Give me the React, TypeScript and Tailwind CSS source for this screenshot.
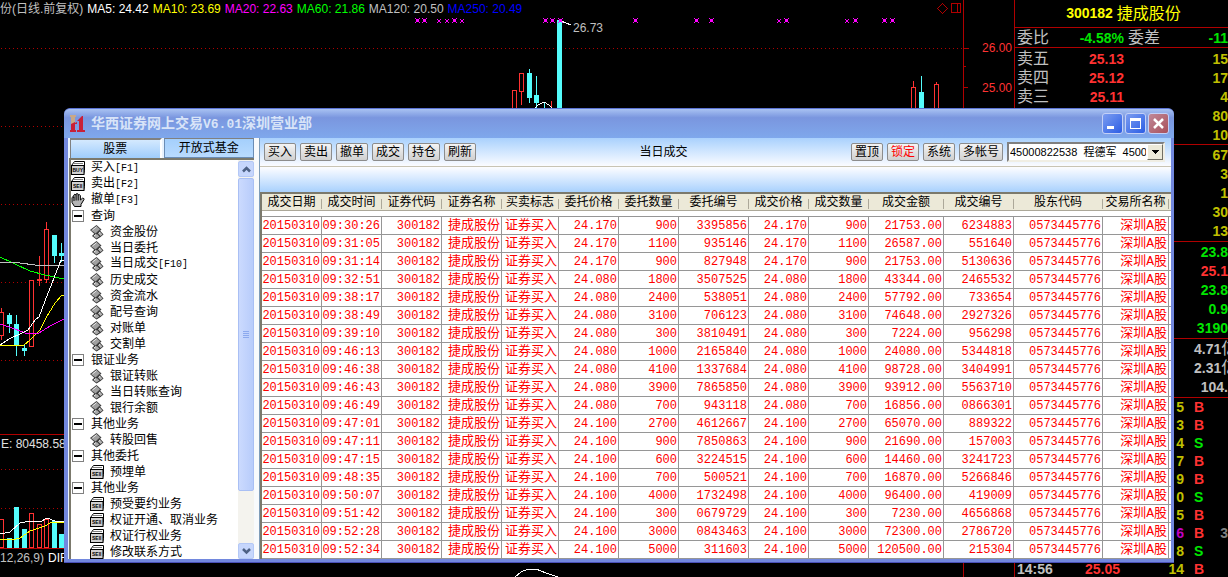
import type { ReactNode } from 'react';
import clsx from 'clsx';

const SANS = "font-['Liberation_Sans','Noto_Sans_CJK_SC',sans-serif]";
const MONO = "font-['Liberation_Mono','Noto_Sans_CJK_SC',monospace]";

/* ---------- data ---------- */

const AVERAGES = [
  { text: 'MA5: 24.42', color: 'text-white' },
  { text: 'MA10: 23.69', color: 'text-[#ffff00]' },
  { text: 'MA20: 22.63', color: 'text-[#ff00ff]' },
  { text: 'MA60: 21.86', color: 'text-[#00ff00]' },
  { text: 'MA120: 20.50', color: 'text-[#c0c0c0]' },
  { text: 'MA250: 20.49', color: 'text-[#0000ff]' },
];

type Candle = { x: number; top: number; bottom: number; high: number; low: number; up?: boolean };

const CANDLES: Candle[] = [
  { x: -1, top: 312, bottom: 336, high: 308, low: 340, up: true },
  { x: 7, top: 315, bottom: 324, high: 313, low: 333 },
  { x: 14, top: 324, bottom: 346, high: 315, low: 356 },
  { x: 22, top: 348, bottom: 351, high: 345, low: 356 },
  { x: 29, top: 280, bottom: 347, high: 280, low: 347, up: true },
  { x: 37, top: 279, bottom: 281, high: 256, low: 286, up: true },
  { x: 44, top: 229, bottom: 280, high: 222, low: 283, up: true },
  { x: 52, top: 235, bottom: 256, high: 235, low: 263 },
  { x: 59, top: 253, bottom: 256, high: 243, low: 262 },
  { x: 512, top: 90, bottom: 120, high: 90, low: 120, up: true },
  { x: 519, top: 73, bottom: 92, high: 73, low: 105, up: true },
  { x: 527, top: 73, bottom: 98, high: 69, low: 103 },
  { x: 534, top: 95, bottom: 103, high: 76, low: 108 },
  { x: 542, top: 112, bottom: 120, high: 103, low: 120 },
  { x: 549, top: 112, bottom: 120, high: 101, low: 120, up: true },
  { x: 557, top: 20, bottom: 120, high: 20, low: 120 },
  { x: 911, top: 87, bottom: 120, high: 81, low: 120, up: true },
  { x: 919, top: 92, bottom: 120, high: 76, low: 120 },
  { x: 934, top: 84, bottom: 120, high: 82, low: 120, up: true },
];

const BIG_MARKS = [417, 424, 454, 545, 552, 560, 635, 696, 711, 786, 855, 884, 892];
const SMALL_MARKS = [439, 447, 462, 779, 847];

const VOLUMES = [
  { x: -1, top: 84, up: true },
  { x: 7, top: 103 },
  { x: 14, top: 72 },
  { x: 22, top: 94 },
  { x: 29, top: 78, up: true },
  { x: 37, top: 89, up: true },
  { x: 44, top: 84, up: true },
  { x: 52, top: 86 },
  { x: 59, top: 99 },
];

const ASKS = [
  { label: '卖五', price: '25.13', size: '15' },
  { label: '卖四', price: '25.12', size: '17' },
  { label: '卖三', price: '25.11', size: '4' },
  { label: '', price: '', size: '80' },
  { label: '', price: '', size: '10' },
];
const BIDS = ['67', '3', '1', '30', '13'];
const STATS = [
  { value: '23.8', color: 'text-[#00e600]' },
  { value: '25.1', color: 'text-[#ff3232]' },
  { value: '23.8', color: 'text-[#00e600]' },
  { value: '0.9', color: 'text-[#00e600]' },
  { value: '3190', color: 'text-[#00e600]' },
];
const TICKS = [
  { lots: '5', side: 'B' },
  { lots: '3', side: 'B' },
  { lots: '4', side: 'S' },
  { lots: '7', side: 'B' },
  { lots: '9', side: 'B' },
  { lots: '0', side: 'S' },
  { lots: '5', side: 'B' },
  { lots: '6', side: 'B', big: true, extra: '3' },
  { lots: '8', side: 'S' },
  { lots: '14', side: 'B', time: '14:56', price: '25.05' },
];

type TreeItem = { label: string; icon: 'buy' | 'sell' | 'hand' | 'group' | 'leaf'; hotkey?: string; child?: boolean };

const TREE: TreeItem[] = [
  { label: '买入', hotkey: '[F1]', icon: 'buy' },
  { label: '卖出', hotkey: '[F2]', icon: 'sell' },
  { label: '撤单', hotkey: '[F3]', icon: 'hand' },
  { label: '查询', icon: 'group' },
  { label: '资金股份', icon: 'leaf', child: true },
  { label: '当日委托', icon: 'leaf', child: true },
  { label: '当日成交', hotkey: '[F10]', icon: 'leaf', child: true },
  { label: '历史成交', icon: 'leaf', child: true },
  { label: '资金流水', icon: 'leaf', child: true },
  { label: '配号查询', icon: 'leaf', child: true },
  { label: '对账单', icon: 'leaf', child: true },
  { label: '交割单', icon: 'leaf', child: true },
  { label: '银证业务', icon: 'group' },
  { label: '银证转账', icon: 'leaf', child: true },
  { label: '当日转账查询', icon: 'leaf', child: true },
  { label: '银行余额', icon: 'leaf', child: true },
  { label: '其他业务', icon: 'group' },
  { label: '转股回售', icon: 'leaf', child: true },
  { label: '其他委托', icon: 'group' },
  { label: '预埋单', icon: 'sell', child: true },
  { label: '其他业务', icon: 'group' },
  { label: '预受要约业务', icon: 'sell', child: true },
  { label: '权证开通、取消业务', icon: 'sell', child: true },
  { label: '权证行权业务', icon: 'sell', child: true },
  { label: '修改联系方式', icon: 'sell', child: true },
];

const COLUMNS = [
  { title: '成交日期', width: 'w-[60px]' },
  { title: '成交时间', width: 'w-[60px]' },
  { title: '证券代码', width: 'w-[60px]' },
  { title: '证券名称', width: 'w-[60px]' },
  { title: '买卖标志', width: 'w-[57px]' },
  { title: '委托价格', width: 'w-[60px]' },
  { title: '委托数量', width: 'w-[60px]' },
  { title: '委托编号', width: 'w-[70px]' },
  { title: '成交价格', width: 'w-[60px]' },
  { title: '成交数量', width: 'w-[60px]' },
  { title: '成交金额', width: 'w-[75px]' },
  { title: '成交编号', width: 'w-[70px]' },
  { title: '股东代码', width: 'w-[89px]' },
  { title: '交易所名称', width: 'w-[66px]' },
];

// time, price, quantity, order no., amount, deal no.
const DEALS = [
  ['09:30:26', '24.170', '900', '3395856', '21753.00', '6234883'],
  ['09:31:05', '24.170', '1100', '935146', '26587.00', '551640'],
  ['09:31:14', '24.170', '900', '827948', '21753.00', '5130636'],
  ['09:32:51', '24.080', '1800', '3507525', '43344.00', '2465532'],
  ['09:38:17', '24.080', '2400', '538051', '57792.00', '733654'],
  ['09:38:49', '24.080', '3100', '706123', '74648.00', '2927326'],
  ['09:39:10', '24.080', '300', '3810491', '7224.00', '956298'],
  ['09:46:13', '24.080', '1000', '2165840', '24080.00', '5344818'],
  ['09:46:38', '24.080', '4100', '1337684', '98728.00', '3404991'],
  ['09:46:43', '24.080', '3900', '7865850', '93912.00', '5563710'],
  ['09:46:49', '24.080', '700', '943118', '16856.00', '0866301'],
  ['09:47:01', '24.100', '2700', '4612667', '65070.00', '889322'],
  ['09:47:11', '24.100', '900', '7850863', '21690.00', '157003'],
  ['09:47:15', '24.100', '600', '3224515', '14460.00', '3241723'],
  ['09:48:35', '24.100', '700', '500521', '16870.00', '5266846'],
  ['09:50:07', '24.100', '4000', '1732498', '96400.00', '419009'],
  ['09:51:42', '24.100', '300', '0679729', '7230.00', '4656868'],
  ['09:52:28', '24.100', '3000', '0843463', '72300.00', '2786720'],
  ['09:52:34', '24.100', '5000', '311603', '120500.00', '215304'],
];

/* ---------- chart ---------- */

function GridLine({ y }: { y: number }) {
  return <line x1="1" x2="100%" y1={y + 0.5} y2={y + 0.5} stroke="#b00000" strokeDasharray="1 3" />;
}

function CandleShape({ x, top, bottom, high, low, up }: Candle) {
  const color = up ? '#ff3232' : '#54fcfc';
  return (
    <g>
      <rect x={x + 2} y={high} width="1" height={top - high} fill={color} />
      <rect x={x + 2} y={bottom} width="1" height={low - bottom} fill={color} />
      <rect x={x} y={top} width="5" height={bottom - top} fill={color} />
      {up && bottom - top > 2 && <rect x={x + 1} y={top + 1} width="3" height={bottom - top - 2} fill="#000" />}
    </g>
  );
}

function PricePane() {
  return (
    <section className="relative h-[435px] shrink-0 border-b border-[#b00000]">
      <svg className="absolute inset-0 h-full w-full" shapeRendering="crispEdges">
        {[48, 126, 204, 282, 360].map((y) => (
          <GridLine key={y} y={y} />
        ))}
        {CANDLES.map((c) => (
          <CandleShape key={c.x} {...c} />
        ))}
        <g fill="none">
          <polyline points="0,257 13,263 30,271 45,275 64,279" stroke="#00ff00" />
          <polyline points="0,262 20,263 35,265 64,265" stroke="#c0c0c0" />
          <polyline points="0,345 24,345 30,340 40,330 46,318 55,303 62,295 66,295" stroke="#ffff00" />
          <polyline points="0,324 15,329 25,333 39,333 50,326 64,319" stroke="#ff00ff" />
          <polyline points="0,345 9,339 22,333 28,330 35,320 39,317 45,301 54,278 61,260 66,260" stroke="#fff" />
          <polyline points="535,108 538,105 544,102 549,105 553,109" stroke="#fff" />
          <polyline points="561,21 566,23 571,25" stroke="#fff" />
        </g>
        <g stroke="#ff00ff">
          {BIG_MARKS.map((x) => (
            <g key={x}>
              <path d={`M${x - 2} 18l5 5M${x + 3} 18l-5 5`} />
              <rect x={x - 1} y="19" width="3" height="3" fill="#ff00ff" stroke="none" />
            </g>
          ))}
          {SMALL_MARKS.map((x) => (
            <path key={x} d={`M${x - 2} 19l4 4M${x + 2} 19l-4 4`} />
          ))}
        </g>
        <g fill="none" stroke="#b00000">
          <path d="M942.5 3.5l5 5-5 5-5-5z" />
          <path d="M951.5 3.5h9v9h-9zM957.5 3.5v9" />
        </g>
        <text x="573" y="32" fill="#c0c0c0" className="text-[12px]">
          26.73
        </text>
      </svg>
      <header className="relative flex h-[18px] items-center gap-1 text-[12px] leading-none whitespace-nowrap text-[#c0c0c0]">
        <span>份(日线.前复权)</span>
        {AVERAGES.map((a) => (
          <span key={a.text} className={a.color}>
            {a.text}
          </span>
        ))}
      </header>
    </section>
  );
}

function VolumePane() {
  return (
    <section className="relative h-[114px] shrink-0 border-b border-[#b00000]">
      <svg className="absolute inset-0 h-full w-full" shapeRendering="crispEdges">
        <GridLine y={34} />
        <GridLine y={73} />
        {VOLUMES.map((v) => (
          <CandleShape key={v.x} x={v.x} top={v.top} bottom={113} high={v.top} low={113} up={v.up} />
        ))}
        <polyline points="0,99 10,97 20,88 30,86 40,87 47,83 55,86 66,87" fill="none" stroke="#fff" />
        <polyline points="0,104 12,105 20,103 30,96 45,91 50,88 66,87" fill="none" stroke="#ffff00" />
      </svg>
      <header className="relative flex h-[18px] items-center pl-px text-[12px] whitespace-nowrap text-[#e0e0e0]">
        E: 80458.58
      </header>
    </section>
  );
}

function MacdPane() {
  return (
    <section className="relative flex-1">
      <svg className="absolute inset-0 h-full w-full" shapeRendering="crispEdges">
        <polyline points="514,29 521,23 528,20 536,20 546,24 558,28" fill="none" stroke="#fff" />
      </svg>
      <header className="relative flex h-[18px] items-center gap-1 text-[12px] whitespace-nowrap text-[#c0c0c0]">
        <span>12,26,9)</span>
        <span className="text-white">DIF</span>
      </header>
    </section>
  );
}

function PriceAxis() {
  return (
    <aside className="relative w-[52px] shrink-0 border-x border-[#b00000] pt-10 text-right text-[12px] leading-4 text-[#ff3232]">
      <svg className="absolute top-0 left-0 h-28 w-2" shapeRendering="crispEdges" fill="#b00000">
        <rect y="48" width="5" height="1" />
        <rect y="66" width="2" height="1" />
        <rect y="87" width="4" height="1" />
      </svg>
      <ul className="flex flex-col gap-6 pr-0.5">
        <li>26.00</li>
        <li>25.00</li>
      </ul>
    </aside>
  );
}

/* ---------- quote panel ---------- */

function QuoteGroup({ children }: { children: ReactNode }) {
  return <div className="shrink-0 border-b border-[#b00000] pt-px">{children}</div>;
}

function QuotePanel() {
  return (
    <aside className="flex w-[213px] shrink-0 flex-col overflow-hidden text-[14px] font-bold whitespace-nowrap text-[#c0c000]">
      <h2 className="flex h-7 shrink-0 items-center justify-center gap-1 border-b border-[#b00000] pl-1 text-[#ffff00]">
        300182 <span className="text-[16px] leading-none font-normal">捷成股份</span>
      </h2>
      <div className="grid h-5 shrink-0 grid-cols-[40px_67px_40px_1fr] items-center border-b border-[#b00000] pl-0.5 leading-none text-[#00e600]">
        <span className="text-[16px] font-normal text-[#c0c0c0]">委比</span>
        <span className="text-right">-4.58%</span>
        <span className="pl-1 text-[16px] font-normal text-[#c0c0c0]">委差</span>
        <span className="text-right">-11</span>
      </div>
      <QuoteGroup>
        {ASKS.map((a, i) => (
          <div key={i} className="grid h-[19px] grid-cols-[40px_67px_1fr] items-center pl-0.5 leading-none">
            <span className="text-[16px] font-normal text-[#c0c0c0]">{a.label}</span>
            <span className="text-right text-[#ff3232]">{a.price}</span>
            <span className="text-right">{a.size}</span>
          </div>
        ))}
      </QuoteGroup>
      <QuoteGroup>
        {BIDS.map((b) => (
          <p key={b} className="h-[19px] text-right leading-[19px]">
            {b}
          </p>
        ))}
      </QuoteGroup>
      <QuoteGroup>
        {STATS.map((s, i) => (
          <p key={i} className={clsx('h-[19px] text-right leading-[19px]', s.color)}>
            {s.value}
          </p>
        ))}
      </QuoteGroup>
      <QuoteGroup>
        {['4.71', '2.31'].map((v) => (
          <p key={v} className="h-[19px] pl-[179px] leading-[19px] text-[#c0c0c0]">
            {v}
            <span className="text-[16px] leading-none font-normal">亿</span>
          </p>
        ))}
        <p className="h-[19px] text-right leading-[19px] text-[#c0c0c0]">104.</p>
      </QuoteGroup>
      <ul>
        {TICKS.map((t, i) => (
          <li key={i} className="grid h-[18px] grid-cols-[38px_67px_64px_1fr_auto] items-center leading-none">
            <span className="pl-0.5 text-[#c0c0c0]">{t.time}</span>
            <span className="text-right text-[#ff3232]">{t.price}</span>
            <span className={clsx('text-right', t.big && 'text-[#c000c0]')}>{t.lots}</span>
            <span className={clsx('pl-2.5', t.side === 'B' ? 'text-[#ff3232]' : 'text-[#00e600]')}>{t.side}</span>
            <span className="text-[#808080]">{t.extra}</span>
          </li>
        ))}
      </ul>
    </aside>
  );
}

/* ---------- icons ---------- */

function BoxIcon({ text }: { text: string }) {
  return (
    <svg width="14" height="14" viewBox="0 0 14 14" className="shrink-0">
      <path d="M.5 4.5l3-4h10v9l-1 4H.5z" fill="#fff" stroke="#000" />
      <path d="M3 2.5h9" stroke="#808080" fill="none" />
      <rect x=".5" y="4.5" width="12.500" height="9" fill="#d0d0d0" stroke="#000" />
      <text x="6.700" y="11" textAnchor="middle" fontSize="5" fontWeight="bold" fill="#000">
        {text}
      </text>
    </svg>
  );
}

function HandIcon() {
  return (
    <svg width="14" height="14" viewBox="0 0 14 14" className="shrink-0">
      <path
        d="M3.500 13.500L1 9.500V4.500Q1.800 3 2.800 4.500V2Q3.800 .5 5 2V1.200Q6 -.2 7.200 1.200V2Q8.400 1 9.400 2.500V7L11.500 5.200Q13.500 5.200 13 6.500L10 11.500V13.500z"
        fill="#b4b4b4"
        stroke="#000"
      />
      <path d="M3 4v4M5.100 2v5.500M7.200 2v5.500" stroke="#000" fill="none" />
    </svg>
  );
}

function LeafIcon() {
  return (
    <svg width="14" height="15" viewBox="0 0 14 15" className="shrink-0">
      <path d="M9.500 5L13.500 9.500 10.500 12 6.500 14.500 2 11 5 8z" fill="#303030" />
      <path d="M6.500 0L11.500 4.500 5.500 10 0 5z" fill="#404040" />
      <path d="M6.500 1L10 4.300 5.500 8.500 1.200 5.200z" fill="#a0a0a0" />
      <path d="M9.800 6.500L12.500 9.500 10.500 11 8 8.500z" fill="#b4b4b4" />
      <path d="M5.500 9.800L7 9 9.500 11.500 6.300 13.500 3.200 11z" fill="#a8a8a8" />
      <path d="M2.500 5L6.500 1.800M4 10.800L6 9.500M8.800 8.300L10 7.200" stroke="#e8e8e8" />
    </svg>
  );
}

function GroupIcon() {
  return (
    <svg width="12" height="12" viewBox="0 0 12 12" className="mx-px shrink-0" shapeRendering="crispEdges">
      <rect x=".5" y=".5" width="11" height="11" fill="#fff" stroke="#808080" />
      <rect x="2" y="5" width="8" height="2" fill="#000" />
    </svg>
  );
}

function TreeIcon({ icon }: { icon: TreeItem['icon'] }) {
  if (icon === 'buy') return <BoxIcon text="BUY" />;
  if (icon === 'sell') return <BoxIcon text="SEll" />;
  if (icon === 'hand') return <HandIcon />;
  if (icon === 'group') return <GroupIcon />;
  return <LeafIcon />;
}

/* ---------- trading window ---------- */

function TitleBar() {
  const button = 'flex size-[21px] items-center justify-center rounded-[3px] border border-[#c3d0f7]';
  return (
    <header className="flex h-[30px] shrink-0 items-center gap-1.5 rounded-t-md border-t border-[#5c74d4] bg-linear-to-b from-[#a9c2f2] via-[#7a96df] via-30% to-[#7fa8ec] pr-[5px] pl-1.5">
      <svg width="15" height="17" viewBox="0 0 15 17">
        <path d="M0 0h6v2H5v7H1V2H0z" fill="#c8a888" />
        <path d="M1 9l4-2v8h1v2H0v-2h1zM5 8l2-1v2H5z" fill="#c82038" />
        <path d="M7 6l5-5h1v14h2v2H7v-2h2V6z" fill="#c82038" />
      </svg>
      <h1 className="flex-1 truncate text-[14px] leading-none font-bold text-[#d8e4f8]">
        华西证券网上交易<span className={clsx(MONO, 'text-[13px]')}>V6.01</span>深圳营业部
      </h1>
      <div className="flex gap-0.5">
        <button aria-label="最小化" className={clsx(button, 'bg-linear-to-br from-[#7c9cf0] to-[#2c5ce4]')}>
          <svg width="13" height="13">
            <rect x="1" y="9" width="7" height="3" fill="#fff" />
          </svg>
        </button>
        <button aria-label="最大化" className={clsx(button, 'bg-linear-to-br from-[#7c9cf0] to-[#2c5ce4]')}>
          <svg width="13" height="13" shapeRendering="crispEdges">
            <path d="M1 1h11v11H1zM2 4v7h9V4z" fill="#fff" fillRule="evenodd" />
          </svg>
        </button>
        <button aria-label="关闭" className={clsx(button, 'bg-linear-to-br from-[#c08898] to-[#a8505c]')}>
          <svg width="13" height="13">
            <path d="M2 2l9 9M11 2l-9 9" stroke="#fff" strokeWidth="2.500" />
          </svg>
        </button>
      </div>
    </header>
  );
}

function ScrollButton({ down }: { down?: boolean }) {
  return (
    <button
      aria-label={down ? '向下滚动' : '向上滚动'}
      className="flex h-4 shrink-0 items-center justify-center rounded-[2px] border border-[#b4c8f6] bg-[#c6d6fc]"
    >
      <svg width="9" height="7" fill="none" stroke="#4d6185" strokeWidth="2.500">
        <path d={down ? 'M1 1l3.500 3.500L8 1' : 'M1 5.500L4.500 2 8 5.500'} />
      </svg>
    </button>
  );
}

function Sidebar() {
  return (
    <nav className="flex w-[185px] shrink-0 flex-col">
      <div role="tablist" className="flex h-5 shrink-0 gap-0.5 pl-px text-[12px] leading-none">
        <button
          role="tab"
          aria-selected="true"
          className="flex-1 border-t-2 border-r-2 border-l border-t-[#808080] border-r-white border-l-[#808080] bg-linear-to-b from-[#d4e9fe] to-[#9fcdfc]"
        >
          股票
        </button>
        <button
          role="tab"
          aria-selected="false"
          className="flex-1 border border-t-[#808080] border-r-[#6b8db5] border-b-[#6b8db5] border-l-[#6b8db5] bg-linear-to-b from-[#a4cffc] to-[#b9dbfe]"
        >
          开放式基金
        </button>
      </div>
      <div className="flex min-h-0 flex-1 border-t-2 border-l-2 border-[#7b796c] bg-white">
        <ul className="min-w-0 flex-1 overflow-hidden text-[12px] whitespace-nowrap text-black">
          {TREE.map((item, i) => (
            <li key={i}>
              <a href="#" className={clsx('flex h-4 items-center gap-1.5 leading-4', item.child && 'pl-[19px]')}>
                <TreeIcon icon={item.icon} />
                <span>
                  {item.label}
                  {item.hotkey && <span className={clsx(MONO, 'text-[10px]')}>{item.hotkey}</span>}
                </span>
              </a>
            </li>
          ))}
        </ul>
        <div className="flex w-4 shrink-0 flex-col gap-px bg-[#f4f3ee] pt-px">
          <ScrollButton />
          <div className="min-h-0 flex-1">
            <div className="flex h-[86%] flex-col items-center justify-center gap-px rounded-[2px] border border-[#a9bff4] bg-linear-to-r from-[#cbdafe] to-[#b8ccfb]">
              {[0, 1, 2, 3].map((n) => (
                <span key={n} className="h-px w-1.5 border-b border-[#8ca9ee] bg-[#eef4fe]" />
              ))}
            </div>
          </div>
          <ScrollButton down />
        </div>
      </div>
    </nav>
  );
}

function ToolButton({ children, active }: { children: ReactNode; active?: boolean }) {
  return (
    <button
      className={clsx(
        'h-[18px] shrink-0 rounded-[2px] border border-[#8c8c8c] bg-linear-to-b from-[#f4f4f4] to-[#d0d0d0] px-[3px] text-[12px] leading-none',
        active ? 'text-[#ff0000]' : 'text-black',
      )}
    >
      {children}
    </button>
  );
}

function Toolbar() {
  return (
    <div className="flex h-7 shrink-0 items-center gap-1 bg-linear-to-b from-[#a9d1fd] to-[#fbfcff] pr-1.5 pl-1">
      {['买入', '卖出', '撤单', '成交', '持仓', '刷新'].map((t) => (
        <ToolButton key={t}>{t}</ToolButton>
      ))}
      <h2 className="flex-1 text-center text-[12px] leading-none text-black">当日成交</h2>
      <ToolButton>置顶</ToolButton>
      <ToolButton active>锁定</ToolButton>
      <ToolButton>系统</ToolButton>
      <ToolButton>多帐号</ToolButton>
      <div className="relative h-5 w-[158px] shrink-0 border-2 border-t-[#808080] border-r-[#f0eee4] border-b-[#f0eee4] border-l-[#808080] bg-white">
        <select
          aria-label="资金帐号"
          className="block h-4 w-[137px] appearance-none overflow-hidden bg-white pl-px text-[11px] leading-4 text-clip whitespace-nowrap text-black"
        >
          <option>{'45000822538\u00a0\u00a0程德军\u00a0\u00a04500'}</option>
        </select>
        <span className="pointer-events-none absolute top-0 right-0 flex h-4 w-4 items-center justify-center border border-t-white border-r-[#716f64] border-b-[#716f64] border-l-white bg-[#ece9d8]">
          <svg width="7" height="4" shapeRendering="crispEdges">
            <path d="M0 0h7L3.500 4z" />
          </svg>
        </span>
      </div>
    </div>
  );
}

function DealTable() {
  const cell = 'h-[18px] overflow-hidden border-r border-b border-[#969696] p-0 pr-px';
  return (
    <div className="min-h-0 flex-1 overflow-hidden border-t-2 border-l-2 border-[#7b796c] bg-white">
      <table className="w-full table-fixed border-separate border-spacing-0 whitespace-nowrap">
        <thead className="bg-[#ece9d8] text-[12px] leading-none text-black">
          <tr>
            {COLUMNS.map((c) => (
              <th key={c.title} className={clsx(c.width, 'h-[17px] border-b border-[#aca899] p-0 font-normal')}>
                <div className="flex items-center">
                  <span className="flex-1">{c.title}</span>
                  <span className="mt-1 h-2.5 w-px bg-[#aca899]" />
                </div>
              </th>
            ))}
            <th className="border-b border-[#aca899] p-0" />
          </tr>
        </thead>
        <tbody className={clsx(MONO, 'text-right text-[12px] leading-none text-[#ff0000]')}>
          <tr>
            <td colSpan={15} className="h-1.5 border-b border-[#969696] p-0" />
          </tr>
          {DEALS.map(([time, price, quantity, order, amount, deal]) => (
            <tr key={time}>
              <td className={cell}>20150310</td>
              <td className={cell}>{time}</td>
              <td className={cell}>300182</td>
              <td className={clsx(cell, 'text-[13px]')}>捷成股份</td>
              <td className={clsx(cell, 'text-[13px]')}>证券买入</td>
              <td className={cell}>{price}</td>
              <td className={cell}>{quantity}</td>
              <td className={cell}>{order}</td>
              <td className={cell}>{price}</td>
              <td className={cell}>{quantity}</td>
              <td className={cell}>{amount}</td>
              <td className={cell}>{deal}</td>
              <td className={cell}>0573445776</td>
              <td className={clsx(cell, 'text-[13px]')}>深圳A股</td>
              <td className="border-b border-[#969696] p-0" />
            </tr>
          ))}
        </tbody>
      </table>
    </div>
  );
}

function TradingWindow() {
  return (
    <main className="absolute top-[108px] right-[54px] bottom-[14px] left-16 flex flex-col rounded-t-lg border-b border-[#4a50b8] bg-[#7288de]">
      <TitleBar />
      <div className="mr-[3px] mb-[3px] ml-1 flex min-h-0 flex-1 bg-[#e9f3fe] pl-px">
        <Sidebar />
        <div className="w-1.5 shrink-0 border-r border-[#7f9db9] bg-[#f8fafc]" />
        <div className="flex min-w-0 flex-1 flex-col">
          <Toolbar />
          <div className="h-[26px] shrink-0 border-t border-[#c8c4b4] bg-linear-to-b from-[#fdfdff] to-[#a9d1fd]" />
          <DealTable />
        </div>
      </div>
    </main>
  );
}

export default function App() {
  return (
    <div className={clsx(SANS, 'relative flex h-screen min-h-[560px] overflow-hidden bg-black')}>
      <div className="flex min-w-0 flex-1 flex-col overflow-hidden">
        <PricePane />
        <VolumePane />
        <MacdPane />
      </div>
      <PriceAxis />
      <QuotePanel />
      <TradingWindow />
    </div>
  );
}
